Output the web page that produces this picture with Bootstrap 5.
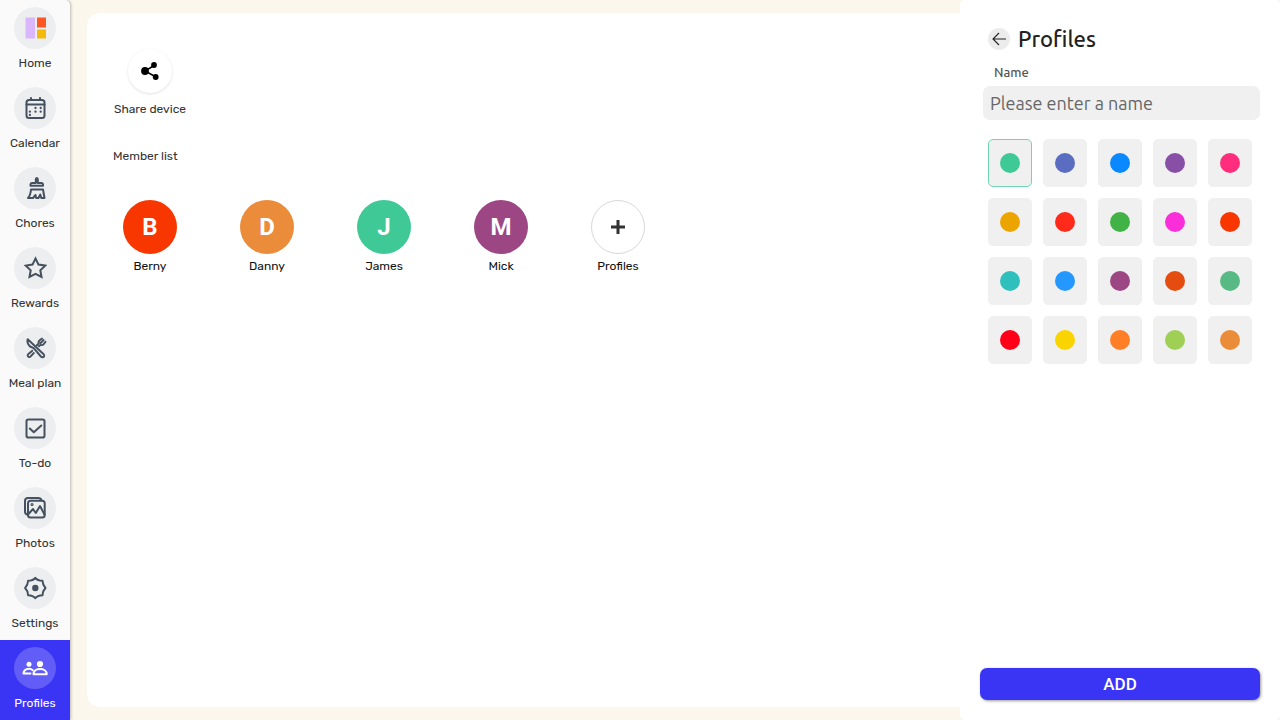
<!DOCTYPE html>
<html lang="en">
<head>
<meta charset="utf-8">
<meta name="viewport" content="width=device-width, initial-scale=1">
<title>Profiles</title>
<link href="https://cdn.jsdelivr.net/npm/bootstrap@5.3.0/dist/css/bootstrap.min.css" rel="stylesheet">
<style>
  body { background: #fcf7ec; font-family: Rubik, Roboto, sans-serif; font-size: 12px; line-height: 16px; color: #333; }
  a { color: inherit; text-decoration: none; }
  .side-menu { width: 70px; background: #fafafa; border-radius: 0 5px 0 0; box-shadow: 1px 0 3px rgba(0,0,0,.25); }
  .side-link { height: 80px; padding-top: 7px; gap: 6px; color: #333; white-space: nowrap; }
  .side-link.active { background: #3a35f5; color: #fff; }
  .icon-disc { width: 42px; height: 42px; background: #eceef0; color: #45515f; }
  .active .icon-disc { background: #625df7; color: #fff; }
  .icon-disc svg { width: 24px; height: 24px; fill: none; stroke: currentColor; stroke-width: 2; stroke-linejoin: round; stroke-linecap: round; }
  .board { margin: 13px 0 13px 17px; padding: 36px 26px; background: #fff; border-radius: 13px 0 0 13px; }
  .tile { width: 74px; white-space: nowrap; }
  .share-disc { width: 44px; height: 44px; box-shadow: 0 1px 3px rgba(0,0,0,.12); }
  .list-title { font-size: 12px; line-height: 16px; font-weight: 400; margin: 31px 0 36px; }
  .members { gap: 43px; color: #111; }
  .avatar { width: 54px; height: 54px; margin-bottom: 4px; color: #fff; font-family: Roboto, sans-serif; font-size: 24px; font-weight: 700; }
  .avatar-add { border: 1px solid #d8d8d8; color: #333; }
  .panel { width: 320px; padding: 24px 20px 20px; background: #fff; border-radius: 5px; font-family: Ubuntu, "Noto Sans", sans-serif; }
  .back { width: 22px; height: 22px; background: #ececec; color: #222; }
  .panel-title { font-size: 22px; line-height: 30px; font-weight: 500; color: #222; }
  .name-label { margin: 8px 0 4px 14px; font-size: 13px; line-height: 20px; font-weight: 500; color: #555; }
  .name-box { margin-left: 3px; width: auto; height: 34px; padding: 0 7px; border: 0; border-radius: 7px; background: #f0f0f0; font-size: 18px; color: #333; }
  .name-box::placeholder { color: #666; opacity: 1; }
  .swatches { display: grid; grid-template-columns: repeat(5, 1fr); gap: 11px; margin: 19px 8px 0; }
  .swatch { height: 48px; padding: 0; border: 1px solid #f0f0f0; border-radius: 5px; background: #f0f0f0; }
  .swatch span { width: 20px; height: 20px; background: var(--tone); }
  .swatch:hover { background: #f0f0f0; border-color: #ddd; }
  .btn-check:checked + .swatch { background: #f0f0f0; border-color: #6fd6b1; }
  .add { height: 32px; padding: 0; border: 0; border-radius: 7px; background: #3a35f5; color: #fff; font: 500 17px/32px Roboto, sans-serif; box-shadow: 1px 1px 3px rgba(0,0,0,.4); }
</style>
</head>
<body>
<div class="d-flex min-vh-100">
  <nav class="side-menu flex-shrink-0 d-flex flex-column position-relative" aria-label="Main">
    <a href="#" class="side-link d-flex flex-column align-items-center">
      <span class="icon-disc rounded-circle d-flex align-items-center justify-content-center"><svg viewBox="0 0 24 24"><g stroke="none"><path fill="#dab6fc" d="M2.500 1.500h9.500v21H2.500z"/><path fill="#ff5722" d="M14 1.500h9v10h-9z"/><path fill="#f5b90b" d="M14 13.500h9v9h-9z"/></g></svg></span>Home</a>
    <a href="#" class="side-link d-flex flex-column align-items-center">
      <span class="icon-disc rounded-circle d-flex align-items-center justify-content-center"><svg viewBox="0 0 24 24"><rect x="3.500" y="4" width="18" height="18" rx="2.500"/><path d="M3.500 8.500h18M8 2v2M17 2v2"/><path d="M12.500 12h.01M17.700 12h.01M6.900 15.700h.01M12.500 15.700h.01M17.700 15.700h.01M6.900 19h.01" stroke-width="2.300"/></svg></span>Calendar</a>
    <a href="#" class="side-link d-flex flex-column align-items-center">
      <span class="icon-disc rounded-circle d-flex align-items-center justify-content-center"><svg viewBox="0 0 24 24"><path d="M12.800 7V3.500q0-1.500 1-1.500t1 1.500V7h4q1.200 0 1.200 1.500v1.200H7.500V8.500Q7.500 7 8.700 7zM8 13.500h12l1.500 8.500h-3.200l-1-3.500-1.800 3.500h-2.300l-.7-3-2.500 3H5q2.500-2.500 3-8.500z"/></svg></span>Chores</a>
    <a href="#" class="side-link d-flex flex-column align-items-center">
      <span class="icon-disc rounded-circle d-flex align-items-center justify-content-center"><svg viewBox="0 0 24 24"><path d="M12.500 2.500l3 6.100 6.700 1-4.900 4.700 1.200 6.700-6-3.200-6 3.200 1.200-6.700-4.900-4.700 6.700-1z" stroke-linejoin="miter"/></svg></span>Rewards</a>
    <a href="#" class="side-link d-flex flex-column align-items-center">
      <span class="icon-disc rounded-circle d-flex align-items-center justify-content-center"><svg viewBox="0 0 24 24"><path d="M4.700 3.200c-.9 2.800.4 5.300 2.400 7.300l3.600 1.700 7.200 8.300c1 1 2.500 1 3.100.2.600-.9.200-2-.6-2.800z"/><path d="M9.300 14.700l-4.200 3.500c-1.500 1.500.8 3.900 2.300 2.400L10.800 17M13.700 9.500l2-2c-.6-1.700.2-2.800 1.300-3.600L19 2.500M16 10.300l1.500-1.400c1.400.5 2.600 0 3.400-1L22.500 5.700M17.600 7l3-3" stroke-width="1.900"/></svg></span>Meal plan</a>
    <a href="#" class="side-link d-flex flex-column align-items-center">
      <span class="icon-disc rounded-circle d-flex align-items-center justify-content-center"><svg viewBox="0 0 24 24"><rect x="3.500" y="3.500" width="18" height="18" rx="1.800"/><path d="M6.800 12.500l4 3.800 7.500-6.800"/></svg></span>To-do</a>
    <a href="#" class="side-link d-flex flex-column align-items-center">
      <span class="icon-disc rounded-circle d-flex align-items-center justify-content-center"><svg viewBox="0 0 24 24"><path d="M4.500 18.500Q2 18.300 2 15.500V5q0-3 3-3h10q3 0 3.500 2.500"/><rect x="5" y="4.800" width="16.700" height="16.700" rx="2.500"/><path d="M5.500 18l4.500-5 2.800 4L17 10l4.500 8.500"/><circle cx="9" cy="8.500" r=".6"/></svg></span>Photos</a>
    <a href="#" class="side-link d-flex flex-column align-items-center">
      <span class="icon-disc rounded-circle d-flex align-items-center justify-content-center"><svg viewBox="0 0 24 24"><path d="M12.300 1.800q2.200 2.800 7.200 3 .2 4.400 3 7.200-2.800 2.800-3 7.200-5 .2-7.200 3-2.200-2.800-7.200-3-.2-4.400-3-7.200 2.800-2.800 3-7.200 5-.2 7.200-3z"/><circle cx="12.300" cy="12" r="3.200" fill="currentColor" stroke="none"/></svg></span>Settings</a>
    <a href="#" class="side-link active d-flex flex-column align-items-center" aria-current="page">
      <span class="icon-disc rounded-circle d-flex align-items-center justify-content-center"><svg viewBox="0 0 26 24" style="width:26px"><g fill="currentColor" stroke="none"><circle cx="7" cy="8.300" r="2.500"/><circle cx="18" cy="8" r="3.100"/></g><path d="M11.500 18.300h13.200c0-7-13.200-7-13.200 0zM8.500 17.500H1.500c0-4.500 6-6 9.300-3.300"/></svg></span>Profiles</a>
  </nav>

  <main class="board flex-grow-1">
    <a href="#" class="tile d-flex flex-column align-items-center">
      <span class="share-disc rounded-circle d-flex align-items-center justify-content-center mb-2"><svg width="20" height="20" viewBox="0 0 20 20"><path d="M15 4L5 10l11 6" fill="none" stroke="#000" stroke-width="1.500"/><circle cx="5" cy="10" r="3.900"/><circle cx="14" cy="4" r="2.900"/><circle cx="15.700" cy="16" r="2.900"/></svg></span>Share device</a>
    <h2 class="list-title">Member list</h2>
    <div class="members d-flex flex-wrap">
      <a href="#" class="tile d-flex flex-column align-items-center"><span class="avatar rounded-circle d-flex align-items-center justify-content-center" style="background:#f73600">B</span>Berny</a>
      <a href="#" class="tile d-flex flex-column align-items-center"><span class="avatar rounded-circle d-flex align-items-center justify-content-center" style="background:#eb8c3a">D</span>Danny</a>
      <a href="#" class="tile d-flex flex-column align-items-center"><span class="avatar rounded-circle d-flex align-items-center justify-content-center" style="background:#3fc997">J</span>James</a>
      <a href="#" class="tile d-flex flex-column align-items-center"><span class="avatar rounded-circle d-flex align-items-center justify-content-center" style="background:#9d4684">M</span>Mick</a>
      <a href="#" class="tile d-flex flex-column align-items-center"><span class="avatar avatar-add rounded-circle d-flex align-items-center justify-content-center"><svg width="14" height="14" viewBox="0 0 14 14" stroke="#333" stroke-width="3"><path d="M7 0v14M0 7h14"/></svg></span>Profiles</a>
    </div>
  </main>

  <aside class="panel flex-shrink-0">
    <form class="d-flex flex-column h-100">
      <div class="d-flex align-items-center gap-2 ms-2">
        <button type="button" class="back btn p-0 border-0 rounded-circle d-flex align-items-center justify-content-center" aria-label="Back"><svg width="14" height="14" viewBox="0 0 14 14" fill="none" stroke="currentColor" stroke-width="1.100"><path d="M14 7H1M7 1L1 7l6 6"/></svg></button>
        <h1 class="panel-title mb-0">Profiles</h1>
      </div>
      <label class="name-label" for="member-name">Name</label>
      <input class="name-box form-control" id="member-name" type="text" placeholder="Please enter a name">
      <div class="swatches" role="radiogroup" aria-label="Colour">
        <input class="btn-check" type="radio" name="tone" id="t1" checked><label class="swatch btn d-flex align-items-center justify-content-center" for="t1" aria-label="Mint"><span class="rounded-circle" style="--tone:#3fc997"></span></label>
        <input class="btn-check" type="radio" name="tone" id="t2"><label class="swatch btn d-flex align-items-center justify-content-center" for="t2" aria-label="Indigo"><span class="rounded-circle" style="--tone:#5a6dc0"></span></label>
        <input class="btn-check" type="radio" name="tone" id="t3"><label class="swatch btn d-flex align-items-center justify-content-center" for="t3" aria-label="Blue"><span class="rounded-circle" style="--tone:#0a88ff"></span></label>
        <input class="btn-check" type="radio" name="tone" id="t4"><label class="swatch btn d-flex align-items-center justify-content-center" for="t4" aria-label="Purple"><span class="rounded-circle" style="--tone:#884fa6"></span></label>
        <input class="btn-check" type="radio" name="tone" id="t5"><label class="swatch btn d-flex align-items-center justify-content-center" for="t5" aria-label="Pink"><span class="rounded-circle" style="--tone:#ff2d7c"></span></label>
        <input class="btn-check" type="radio" name="tone" id="t6"><label class="swatch btn d-flex align-items-center justify-content-center" for="t6" aria-label="Amber"><span class="rounded-circle" style="--tone:#eba400"></span></label>
        <input class="btn-check" type="radio" name="tone" id="t7"><label class="swatch btn d-flex align-items-center justify-content-center" for="t7" aria-label="Scarlet"><span class="rounded-circle" style="--tone:#ff2a1a"></span></label>
        <input class="btn-check" type="radio" name="tone" id="t8"><label class="swatch btn d-flex align-items-center justify-content-center" for="t8" aria-label="Green"><span class="rounded-circle" style="--tone:#41b346"></span></label>
        <input class="btn-check" type="radio" name="tone" id="t9"><label class="swatch btn d-flex align-items-center justify-content-center" for="t9" aria-label="Magenta"><span class="rounded-circle" style="--tone:#fb2fd9"></span></label>
        <input class="btn-check" type="radio" name="tone" id="t10"><label class="swatch btn d-flex align-items-center justify-content-center" for="t10" aria-label="Vermilion"><span class="rounded-circle" style="--tone:#f73600"></span></label>
        <input class="btn-check" type="radio" name="tone" id="t11"><label class="swatch btn d-flex align-items-center justify-content-center" for="t11" aria-label="Teal"><span class="rounded-circle" style="--tone:#2fbfbc"></span></label>
        <input class="btn-check" type="radio" name="tone" id="t12"><label class="swatch btn d-flex align-items-center justify-content-center" for="t12" aria-label="Sky"><span class="rounded-circle" style="--tone:#2598ff"></span></label>
        <input class="btn-check" type="radio" name="tone" id="t13"><label class="swatch btn d-flex align-items-center justify-content-center" for="t13" aria-label="Plum"><span class="rounded-circle" style="--tone:#9d4684"></span></label>
        <input class="btn-check" type="radio" name="tone" id="t14"><label class="swatch btn d-flex align-items-center justify-content-center" for="t14" aria-label="Rust"><span class="rounded-circle" style="--tone:#e54c10"></span></label>
        <input class="btn-check" type="radio" name="tone" id="t15"><label class="swatch btn d-flex align-items-center justify-content-center" for="t15" aria-label="Sage"><span class="rounded-circle" style="--tone:#57ba84"></span></label>
        <input class="btn-check" type="radio" name="tone" id="t16"><label class="swatch btn d-flex align-items-center justify-content-center" for="t16" aria-label="Red"><span class="rounded-circle" style="--tone:#ff0018"></span></label>
        <input class="btn-check" type="radio" name="tone" id="t17"><label class="swatch btn d-flex align-items-center justify-content-center" for="t17" aria-label="Yellow"><span class="rounded-circle" style="--tone:#fad400"></span></label>
        <input class="btn-check" type="radio" name="tone" id="t18"><label class="swatch btn d-flex align-items-center justify-content-center" for="t18" aria-label="Orange"><span class="rounded-circle" style="--tone:#ff7f27"></span></label>
        <input class="btn-check" type="radio" name="tone" id="t19"><label class="swatch btn d-flex align-items-center justify-content-center" for="t19" aria-label="Lime"><span class="rounded-circle" style="--tone:#a0cf55"></span></label>
        <input class="btn-check" type="radio" name="tone" id="t20"><label class="swatch btn d-flex align-items-center justify-content-center" for="t20" aria-label="Apricot"><span class="rounded-circle" style="--tone:#eb8c3a"></span></label>
      </div>
      <button type="button" class="add btn mt-auto">ADD</button>
    </form>
  </aside>
</div>
<script src="https://cdn.jsdelivr.net/npm/bootstrap@5.3.0/dist/js/bootstrap.bundle.min.js"></script>
</body>
</html>
